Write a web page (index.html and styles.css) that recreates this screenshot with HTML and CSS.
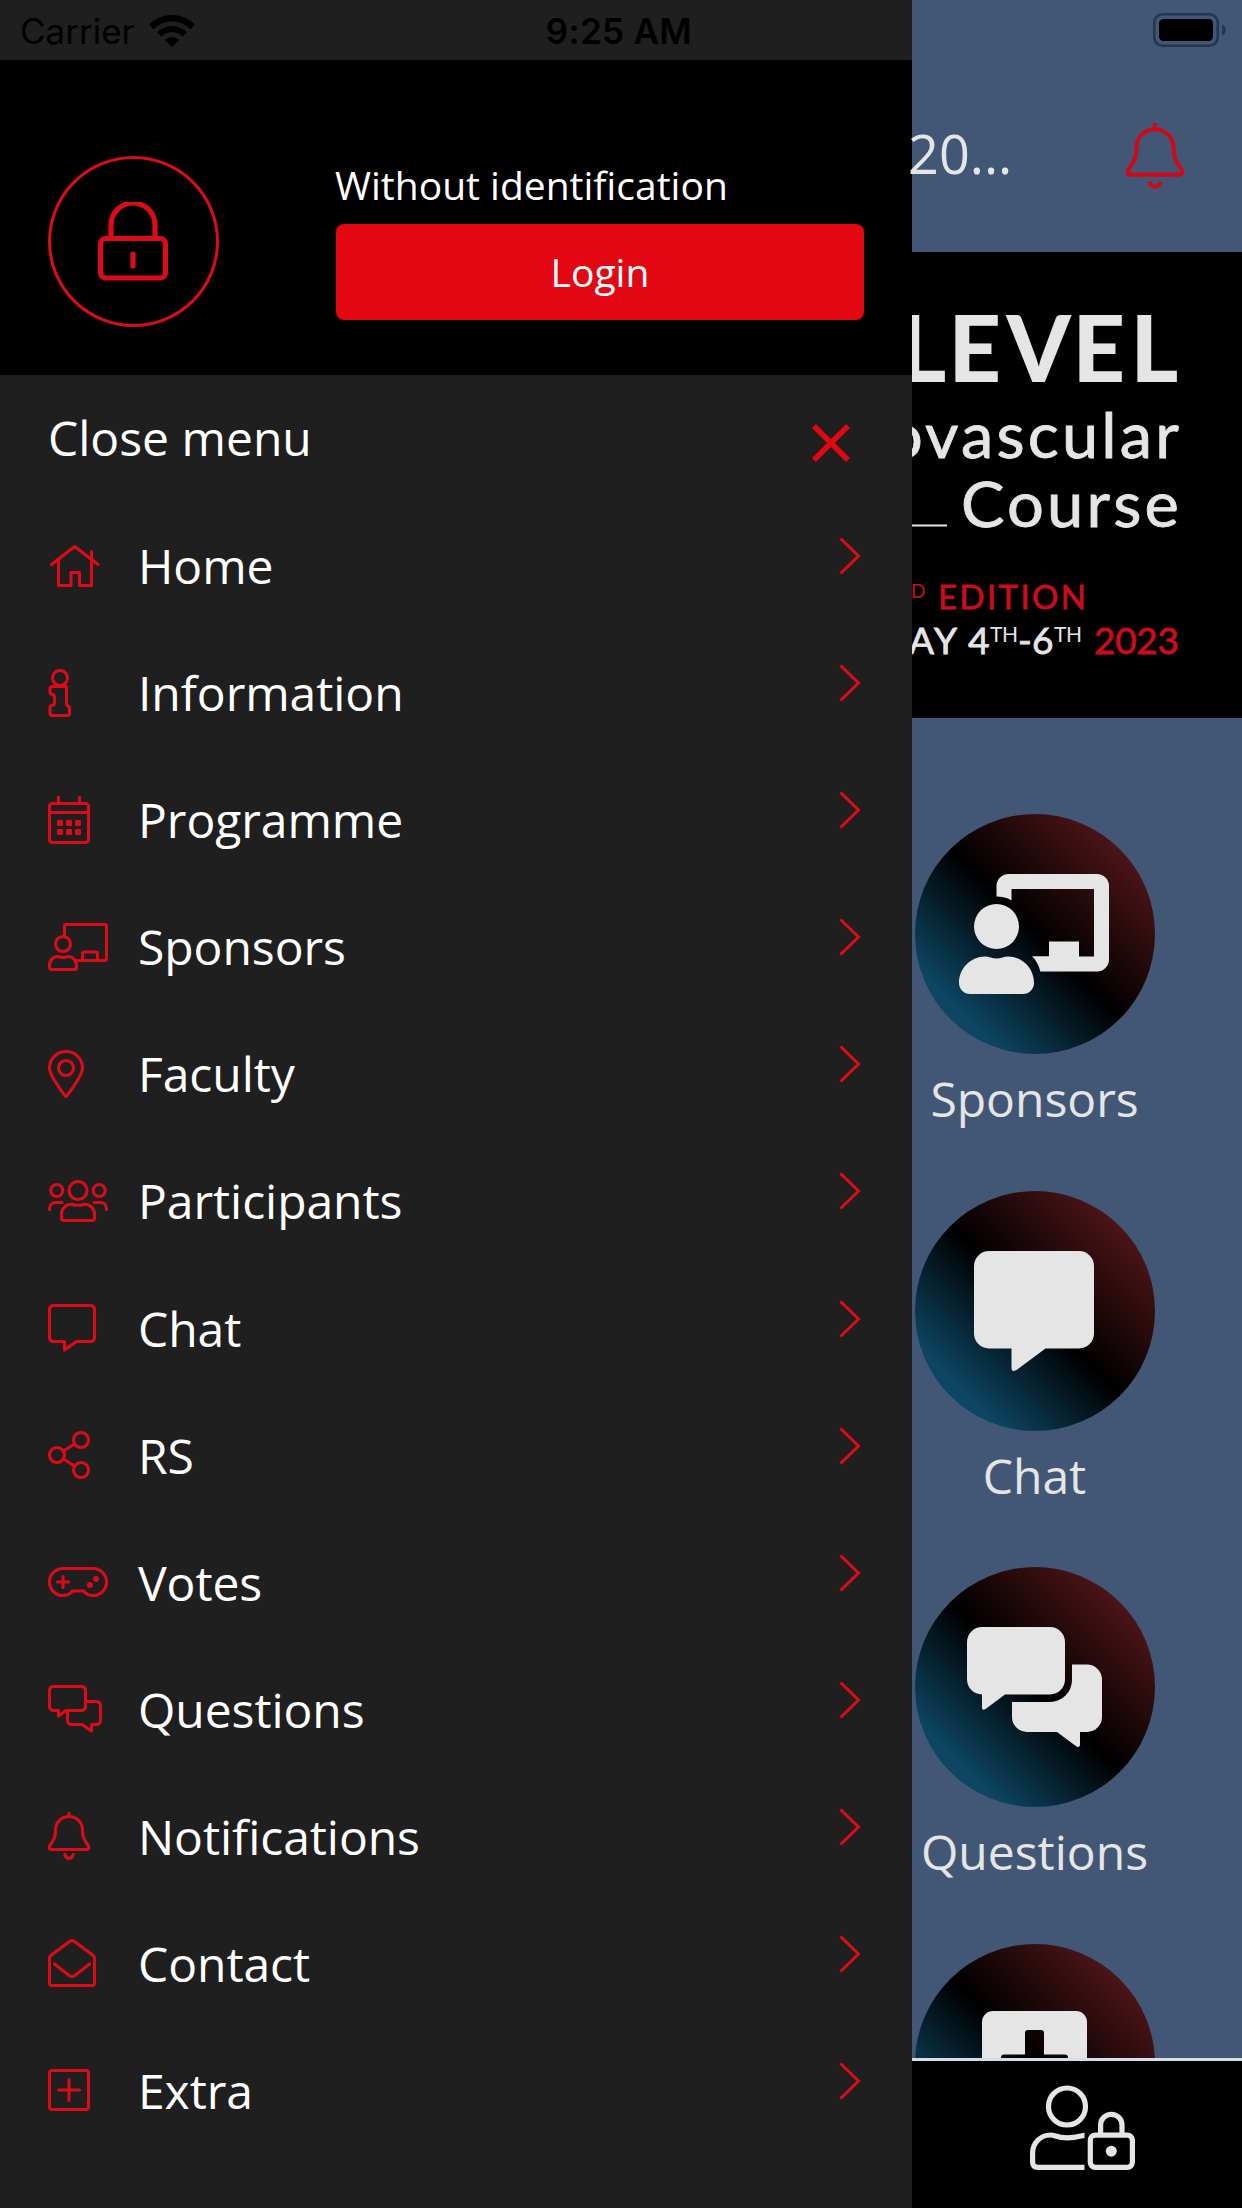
FILE: index.html
```html
<!DOCTYPE html>
<html lang="en">
<head>
<meta charset="utf-8">
<title>Menu</title>
<link rel="stylesheet" href="styles.css">
</head>
<body>
<div class="screen">
  <header class="status">
    <span class="carrier">Carrier</span>
    <svg class="wifi" width="46" height="34" viewBox="0 0 46 34"><path d="M0 11.5A32.500 32.500 0 0 1 46 11.500L41.500 16.200A26.200 26.200 0 0 0 4.500 16.200ZM8 19.200A21.500 21.500 0 0 1 38 19.200L33.600 23.600A15.200 15.200 0 0 0 12.400 23.600ZM15.800 27A10.300 10.300 0 0 1 30.200 27L23 34Z"/></svg>
    <span class="time">9:25 AM</span>
    <svg class="battery" width="75" height="34" viewBox="0 0 75 34"><rect x="1.250" y="1.250" width="63.500" height="31.500" rx="8.500" fill="none" stroke="#25354e" stroke-width="2.500"/><rect x="6" y="6" width="54" height="22" rx="4.500"/><path d="M69 11.500c5 1.500 5 9.500 0 11Z" fill="#25354e"/></svg>
  </header>

  <aside class="drawer">
    <section class="account">
      <div class="avatar">
        <svg width="70" height="80" viewBox="0 0 70 80" class="line"><path d="M13 36V23a22 22 0 0 1 44 0V36M35 52v12" stroke-width="5.200"/><rect x="2.600" y="36.500" width="64.800" height="39.500" rx="5" stroke-width="5.200"/></svg>
      </div>
      <div class="identity">
        <p class="who">Without identification</p>
        <button class="login">Login</button>
      </div>
    </section>
    <div class="close">
      <span>Close menu</span>
      <svg width="38" height="38" viewBox="0 0 38 38"><path d="M2 2L36 36M36 2L2 36" stroke="#e30613" stroke-width="5.400" fill="none"/></svg>
    </div>
    <nav class="menu">
      <a class="item"><svg class="icon line" viewBox="0 0 60 48"><path d="M3.500 22.500L26.700 4.500L50 22.500M10.500 18V43.500H23V30.500H31.500V43.500H43.500V9.500"/></svg><span>Home</span><svg class="chev" viewBox="0 0 22 38"><path d="M1.500 1.500L19.500 19L1.500 36.500"/></svg></a>
      <a class="item"><svg class="icon line" viewBox="0 0 60 48"><circle cx="12" cy="9" r="7.500"/><path d="M4.500 17.500H18.500V35Q18.500 36 19.500 36.500Q21.500 37.500 21.500 39V44Q21.500 46.500 19 46.500H4.500Q2 46.500 2 44V39Q2 37 4 36.300Q6.500 36 6.500 34V28Q6.500 26 4.500 25.500Q2 25 2 22.500V20Q2 17.500 4.500 17.500Z"/></svg><span>Information</span><svg class="chev" viewBox="0 0 22 38"><path d="M1.500 1.500L19.500 19L1.500 36.500"/></svg></a>
      <a class="item"><svg class="icon line" viewBox="0 0 60 48"><path d="M10.500 0V7M31.500 0V7M1.500 16.500H40.500"/><rect x="1.500" y="7.500" width="39" height="39" rx="3"/><g class="solid"><rect x="9" y="24" width="6" height="6" rx="1"/><rect x="18" y="24" width="6" height="6" rx="1"/><rect x="27" y="24" width="6" height="6" rx="1"/><rect x="9" y="33" width="6" height="6" rx="1"/><rect x="18" y="33" width="6" height="6" rx="1"/><rect x="27" y="33" width="6" height="6" rx="1"/></g></svg><span>Programme</span><svg class="chev" viewBox="0 0 22 38"><path d="M1.500 1.500L19.500 19L1.500 36.500"/></svg></a>
      <a class="item"><svg class="icon line" viewBox="0 0 60 48"><path d="M16.500 13V3Q16.500 1.500 18 1.500H57Q58.500 1.500 58.500 3V36Q58.500 37.500 57 37.500H29M34.500 37V30.500Q34.500 29 36 29H48Q49.500 29 49.500 30.500V37"/><circle cx="15" cy="21" r="7.500"/><path d="M10 33.500Q12.500 34.500 15 34.500T20 33.500C25 33.500 28.500 37.500 28.500 42V44.500Q28.500 46.500 26.500 46.500H3.500Q1.500 46.500 1.500 44.500V42C1.500 37.500 5 33.500 10 33.500Z"/></svg><span>Sponsors</span><svg class="chev" viewBox="0 0 22 38"><path d="M1.500 1.500L19.500 19L1.500 36.500"/></svg></a>
      <a class="item"><svg class="icon line" viewBox="0 0 60 48"><path d="M18 1.500A16.500 16.500 0 0 1 34.500 18C34.500 25 24 39 18.800 46Q18 47 17.200 46C12 39 1.500 25 1.500 18A16.500 16.500 0 0 1 18 1.500Z"/><circle cx="18" cy="18" r="7.500"/></svg><span>Faculty</span><svg class="chev" viewBox="0 0 22 38"><path d="M1.500 1.500L19.500 19L1.500 36.500"/></svg></a>
      <a class="item"><svg class="icon line" viewBox="0 0 60 48"><circle cx="30" cy="13.500" r="9"/><circle cx="8.800" cy="13.500" r="6"/><circle cx="51.200" cy="13.500" r="6"/><path d="M1.500 32.500C1.500 28 4 25.500 7.500 25.500H14M58.500 32.500C58.500 28 56 25.500 52.500 25.500H46M23.500 27.200Q27 28.300 30 28.300T36.500 27.200C42 27.200 46.500 31.500 46.500 37V41Q46.500 43.500 44 43.500H16Q13.500 43.500 13.500 41V37C13.500 31.500 18 27.200 23.500 27.200Z"/></svg><span>Participants</span><svg class="chev" viewBox="0 0 22 38"><path d="M1.500 1.500L19.500 19L1.500 36.500"/></svg></a>
      <a class="item"><svg class="icon line" viewBox="0 0 60 48"><path d="M6 1.500H42Q46.500 1.500 46.500 6V33Q46.500 37.500 42 37.500H28.500L16.500 46V37.500H6Q1.500 37.500 1.500 33V6Q1.500 1.500 6 1.500Z"/></svg><span>Chat</span><svg class="chev" viewBox="0 0 22 38"><path d="M1.500 1.500L19.500 19L1.500 36.500"/></svg></a>
      <a class="item"><svg class="icon line" viewBox="0 0 60 48"><circle cx="33" cy="9" r="7.500"/><circle cx="9" cy="24" r="7.500"/><circle cx="33" cy="39" r="7.500"/><path d="M15.500 20L26.500 13M15.500 28L26.500 35"/></svg><span>RS</span><svg class="chev" viewBox="0 0 22 38"><path d="M1.500 1.500L19.500 19L1.500 36.500"/></svg></a>
      <a class="item"><svg class="icon line" viewBox="0 0 60 48"><path d="M15 10.500H45A13.500 13.500 0 0 1 45 37.500C41 37.500 37.500 35.500 35.500 33H24.500C22.500 35.500 19 37.500 15 37.500A13.500 13.500 0 0 1 15 10.500ZM15 18.500V29.500M9.500 24H20.500"/><g class="solid"><circle cx="42" cy="27" r="3"/><circle cx="48" cy="21" r="3"/></g></svg><span>Votes</span><svg class="chev" viewBox="0 0 22 38"><path d="M1.500 1.500L19.500 19L1.500 36.500"/></svg></a>
      <a class="item"><svg class="icon line" viewBox="0 0 60 48"><path d="M6 1.500H33Q37.500 1.500 37.500 6V21Q37.500 25.500 33 25.500H18L10.500 31V25.500H6Q1.500 25.500 1.500 21V6Q1.500 1.500 6 1.500ZM38 16.500H48Q52.500 16.500 52.500 21V35Q52.500 39.500 48 39.500H43.500V46L34 39.500H24Q19.500 39.500 19.500 35V26"/></svg><span>Questions</span><svg class="chev" viewBox="0 0 22 38"><path d="M1.500 1.500L19.500 19L1.500 36.500"/></svg></a>
      <a class="item"><svg class="icon line" viewBox="0 0 60 48"><path d="M21 1.500V4.500M21 4.500C13.500 4.500 7.500 10.500 7.500 18C7.500 25 6 27.500 2.500 32.500C0 36 1 37.500 3.500 37.500H38.500C41 37.500 42 36 39.500 32.500C36 27.500 34.500 25 34.500 18C34.500 10.500 28.500 4.500 21 4.500ZM16.800 42.500C17.500 45 19 46.300 21 46.300S24.500 45 25.200 42.500"/></svg><span>Notifications</span><svg class="chev" viewBox="0 0 22 38"><path d="M1.500 1.500L19.500 19L1.500 36.500"/></svg></a>
      <a class="item"><svg class="icon line" viewBox="0 0 60 48"><path d="M1.500 19.500Q1.500 17.500 3.500 16L21.500 2.500Q24 .7 26.500 2.500L44.500 16Q46.500 17.500 46.500 19.500V44Q46.500 46.500 44 46.500H4Q1.500 46.500 1.500 44ZM6.500 25L21.500 36.800Q24 38.500 26.500 36.800L41.500 25"/></svg><span>Contact</span><svg class="chev" viewBox="0 0 22 38"><path d="M1.500 1.500L19.500 19L1.500 36.500"/></svg></a>
      <a class="item"><svg class="icon line" viewBox="0 0 60 48"><rect x="1.500" y="4.500" width="39" height="39" rx="2.500"/><path d="M21 13.500V34.500M10.500 24H31.500"/></svg><span>Extra</span><svg class="chev" viewBox="0 0 22 38"><path d="M1.500 1.500L19.500 19L1.500 36.500"/></svg></a>
    </nav>
  </aside>

  <main class="page">
    <div class="topbar">
      <span class="title">20...</span>
      <svg class="bell" width="58" height="66" viewBox="0 0 42 48"><path d="M21 0V4.500M21 4.500C13.500 4.500 7.500 10.500 7.500 18C7.500 25 6 27.500 2.500 32.500C0 36 1 37.500 3.500 37.500H38.500C41 37.500 42 36 39.500 32.500C36 27.500 34.500 25 34.500 18C34.500 10.500 28.500 4.500 21 4.500ZM16.800 42.500C17.500 45 19 46.300 21 46.300S24.500 45 25.200 42.500"/></svg>
    </div>
    <svg class="banner" width="330" height="466" viewBox="0 0 330 466">
      <text x="-13.500 36.500 94.500 160.500 218.500" y="130" font-size="91.500" font-weight="900">LEVEL</text>
      <text class="wide medium" x="-26" y="206" font-size="61" textLength="296" lengthAdjust="spacingAndGlyphs">ovascular</text>
      <path d="M0 273.500H35" stroke="#e5e5e5" stroke-width="2"/>
      <text class="wide medium" x="49" y="275" font-size="62" textLength="221" lengthAdjust="spacingAndGlyphs">Course</text>
      <g class="red">
        <text x="-1" y="346" font-size="19">D</text>
        <text class="medium" x="26" y="357" font-size="33" textLength="148">EDITION</text>
        <text class="medium" x="182" y="402" font-size="37" textLength="85">2023</text>
      </g>
      <text class="medium" x="-3" y="402" font-size="37" textLength="48">AY</text>
      <text class="medium" x="56" y="402" font-size="37">4</text>
      <text x="78" y="390" font-size="21" textLength="28">TH</text>
      <text class="medium" x="106" y="402" font-size="37">-</text>
      <text class="medium" x="120" y="402" font-size="37">6</text>
      <text x="142" y="390" font-size="21" textLength="28">TH</text>
    </svg>
    <div class="tiles">
      <div class="tile"><div class="disc"><svg width="150" height="120"><path d="M37.500 22.500V12A12 12 0 0 1 49.500 0H138a12 12 0 0 1 12 12V85.500a12 12 0 0 1-12 12H81.300C80 91 77 86 73 82.200H90V67.500H120V82.500H135V15H52.500V26.500C48 23.500 43 22.500 37.500 22.500Z"/><circle cx="37.500" cy="52.500" r="22.500"/><path d="M26 82.500C30 82.500 33 84.500 37.500 84.500S45 82.500 49 82.500C63 82.500 75 94 75 109A11 11 0 0 1 64 120H11A11 11 0 0 1 0 109C0 94 12 82.500 26 82.500Z"/></svg></div><span>Sponsors</span></div>
      <div class="tile"><div class="disc"><svg width="120" height="120"><path d="M15 0H105a15 15 0 0 1 15 15V82.500a15 15 0 0 1-15 15H71.500L42.500 119Q37.500 121.500 37.500 117V97.500H15A15 15 0 0 1 0 82.500V15A15 15 0 0 1 15 0Z"/></svg></div><span>Chat</span></div>
      <div class="tile"><div class="disc"><svg width="135" height="120"><path d="M15 0H83a15 15 0 0 1 15 15V52.500a15 15 0 0 1-15 15H38L18.500 82Q15 84 15 80.500V67.500A15 15 0 0 1 0 52.500V15A15 15 0 0 1 15 0Z"/><path d="M105 37.500H120a15 15 0 0 1 15 15V90a15 15 0 0 1-15 15H113V118Q112.500 121 109.500 119.500L90 105H60a15 15 0 0 1-15-15V75H83a22 22 0 0 0 22-22Z"/></svg></div><span>Questions</span></div>
      <div class="tile"><div class="disc"><svg width="105" height="105"><path fill-rule="evenodd" d="M11 0H94a11 11 0 0 1 11 11V94a11 11 0 0 1-11 11H11A11 11 0 0 1 0 94V11A11 11 0 0 1 11 0ZM46 19a3 3 0 0 0-3 3V43.500H22a3 3 0 0 0-3 3V59a3 3 0 0 0 3 3H43V83a3 3 0 0 0 3 3H59a3 3 0 0 0 3-3V62H83a3 3 0 0 0 3-3V46.500a3 3 0 0 0-3-3H62V22a3 3 0 0 0-3-3Z"/></svg></div></div>
    </div>
    <footer class="tabbar">
      <svg width="105" height="85" viewBox="0 0 105 85"><circle cx="37" cy="21.500" r="18.500"/><path d="M54.500 50.300C52 50.300 47 52.800 37 52.800S25 50 20.500 50C10.500 50 2.600 58 2.600 68V77Q2.600 82.300 8 82.300H54.500"/><rect x="60.300" y="50.200" width="42.100" height="32.100" rx="5"/><path d="M70.600 50V40a10.700 10.700 0 0 1 21.400 0V50"/><circle class="dot" cx="81.300" cy="66.200" r="5.500"/></svg>
    </footer>
  </main>
</div>
</body>
</html>
```
FILE: styles.css
```css
* { box-sizing: border-box; margin: 0; padding: 0; }
body { font-family: "Open Sans", "Noto Sans", sans-serif; }
.screen { position: relative; display: flex; width: 1242px; height: 2208px; overflow: hidden; background: #425776; }
svg { display: block; flex: none; }

/* Status bar, over both the drawer and the page */
.status { position: absolute; inset: 0 0 auto 0; height: 60px; z-index: 2; display: grid; grid-template-columns: auto auto 1fr auto; align-items: center; padding: 0 14px 0 20px; font-family: Inter, sans-serif; font-size: 35px; color: #000; }
.carrier { padding-top: 1px; }
.wifi { margin-left: 14px; }
.time { font-weight: 600; padding: 1px 0 0 351px; letter-spacing: .3px; }

/* Drawer */
.drawer { width: 912px; flex: none; background: #1f1f1f; padding-top: 60px; color: #fff; font-size: 48px; }
.line { fill: none; stroke: #db0c1a; stroke-width: 3.100; stroke-linecap: round; stroke-linejoin: round; }
.account { height: 315px; background: #000; display: flex; justify-content: space-between; padding: 96px 48px 0; }
.avatar { width: 171px; height: 171px; border: 3px solid #db0c1a; border-radius: 50%; display: flex; align-items: center; justify-content: center; padding-right: 2px; }
.identity { width: 528px; font-size: 39px; }
.who { line-height: 58px; height: 68px; margin-left: -1px; white-space: nowrap; }
.login { display: block; width: 528px; height: 96px; border: 0; border-radius: 8px; background: #e30613; color: #fff; font: inherit; padding-bottom: 2px; }
.close { height: 127px; display: flex; justify-content: space-between; align-items: center; padding: 0 62px 2px 48px; }
.close svg { margin-top: 11px; }
.menu { display: flex; flex-direction: column; }
.item { height: 127.08px; display: flex; align-items: center; padding: 0 51px 0 48px; letter-spacing: -.05px; }
.icon { width: 60px; height: 48px; margin-right: 30px; }
.item span { flex: 1; }
.solid { fill: #db0c1a; stroke: none; }
.chev { width: 22px; height: 38px; margin-bottom: 19px; fill: none; stroke: #dd0c1a; stroke-width: 3; }

/* Page behind the drawer */
.page { flex: 1; min-width: 0; display: flex; flex-direction: column; color: #e5e5e5; }
.topbar { height: 252px; padding: 60px 58px 0 0; display: flex; align-items: center; justify-content: space-between; }
.title { font-size: 54px; margin-left: -4px; padding-bottom: 6px; }
.bell { fill: none; stroke: #cd0a17; stroke-width: 3; stroke-linejoin: round; }
.banner { background: #000; fill: #e5e5e5; font-family: Lato, sans-serif; }
.wide { letter-spacing: 3px; }
.medium { stroke: #e5e5e5; stroke-width: .8; }
.red { fill: #c90d1c; }
.red .medium { stroke: #c90d1c; }
.tiles { flex: 1; min-height: 0; overflow: hidden; padding: 96px 0 0 3px; }
.tile { width: 240px; height: 376.600px; display: flex; flex-direction: column; align-items: center; font-size: 48px; line-height: 66px; }
.tile span { margin: 12px 1px 0 0; }
.disc { width: 240px; height: 240px; flex: none; border-radius: 50%; display: flex; align-items: center; justify-content: center; padding-right: 2px; background: linear-gradient(45deg, #0d4663 18%, #000 50%, #4b1417 85%); fill: #e5e5e5; }
.tabbar { height: 150px; flex: none; border-top: 3px solid #d5dfeb; background: #000; padding: 24px 0 0 118px; }
.tabbar svg { fill: none; stroke: #e5e5e5; stroke-width: 5.200; }
.tabbar .dot { fill: #e5e5e5; stroke: none; }
```
